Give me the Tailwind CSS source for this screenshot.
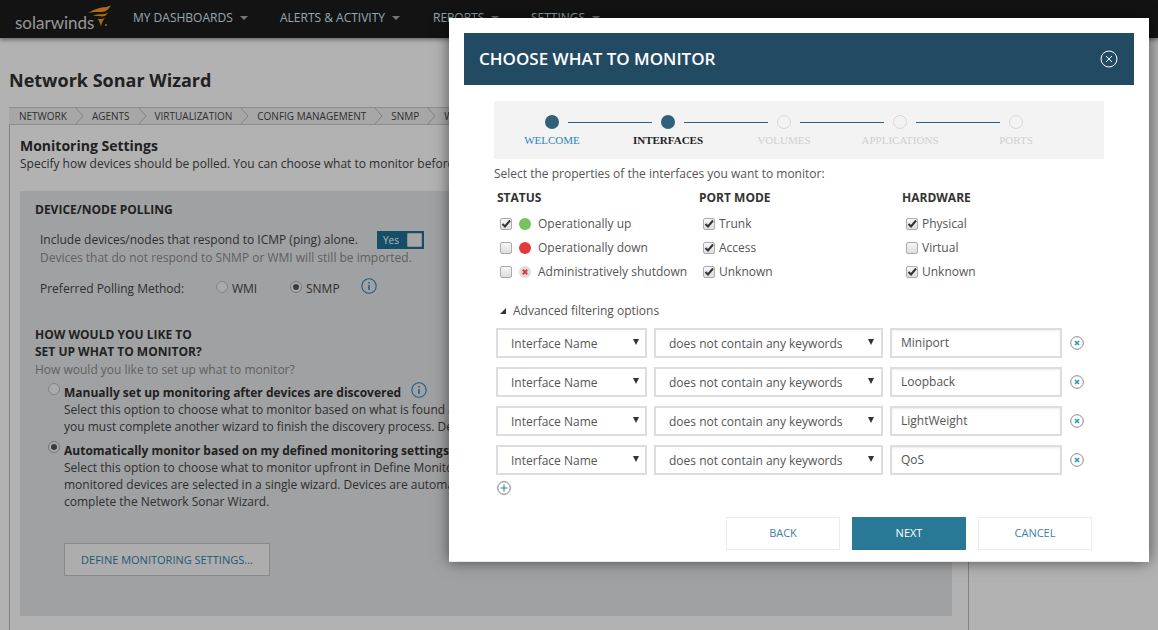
<!doctype html>
<html>
<head>
<meta charset="utf-8">
<script src="https://cdn.jsdelivr.net/npm/@tailwindcss/browser@4"></script>
</head>
<body class="font-['Open_Sans',sans-serif] bg-white text-[#444] h-[630px] overflow-hidden relative">
<header class="h-[38px] bg-[#1c1c1c] flex items-center shadow-[0_2px_4px_rgba(0,0,0,.4)] relative">
  <div class="flex items-center w-[133px] pl-[15px] shrink-0">
    <span class="font-['Lato',sans-serif] text-[17px] text-[#d8d8d8] leading-none mt-[6px] w-[73px]">solarwinds</span>
    <svg class="w-[23px] h-[23px] -mt-[6px] shrink-0" viewBox="0 0 23 23" fill="#f99d1c"><path d="M23 0C19 3 15 1.500 10 3.500 6 5 3 6 0 8 5 6.500 10 7 14 7 18 7 21 4 23 0Z"/><path d="M20 7.500C17 10 13 9 9 9.500 7 9.800 6 10.200 5 11 8 10.500 11 11.500 14 11.500 16.500 11.500 19 10 20 7.500Z"/><path d="M17 12.500C15 14.500 12 14 9.500 14 11 15 12 18 13 21.500 13.500 18 15 15 17 12.500Z"/><circle cx="18" cy="20" r="1"/></svg>
  </div>
  <nav class="flex text-[12px] text-[#dbe9f5] -mt-[3px]">
    <span class="flex items-center w-[147px]">MY DASHBOARDS<i class="ml-[7px] border-x-[4px] border-x-transparent border-t-[4px] border-t-[#aaa]"></i></span>
    <span class="flex items-center w-[153px]">ALERTS &amp; ACTIVITY<i class="ml-[7px] border-x-[4px] border-x-transparent border-t-[4px] border-t-[#aaa]"></i></span>
    <span class="flex items-center w-[98px]">REPORTS<i class="ml-[7px] border-x-[4px] border-x-transparent border-t-[4px] border-t-[#aaa]"></i></span>
    <span class="flex items-center">SETTINGS<i class="ml-[7px] border-x-[4px] border-x-transparent border-t-[4px] border-t-[#aaa]"></i></span>
  </nav>
</header>

<main class="pl-[9px]">
  <h1 class="pt-[30px] h-[69px] text-[18px] leading-[25px] font-bold text-[#303030]">Network Sonar Wizard</h1>
  <div class="w-[960px] h-[523px] border-x border-[#bbb]">
    <div class="h-[18px] bg-[#f0f0f0] border-y border-[#ccc] -mr-px flex items-center text-[10px] text-[#444] uppercase whitespace-nowrap pl-[10px] -ml-px">
      <span>Network</span><svg class="w-[9px] h-[18px] mx-[8px]" viewBox="0 0 9 18" fill="none" stroke="#bbb"><path d="M0 0 L8 9 L0 18"/></svg>
      <span>Agents</span><svg class="w-[9px] h-[18px] mx-[8px]" viewBox="0 0 9 18" fill="none" stroke="#bbb"><path d="M0 0 L8 9 L0 18"/></svg>
      <span>Virtualization</span><svg class="w-[9px] h-[18px] mx-[8px]" viewBox="0 0 9 18" fill="none" stroke="#bbb"><path d="M0 0 L8 9 L0 18"/></svg>
      <span>Config Management</span><svg class="w-[9px] h-[18px] mx-[8px]" viewBox="0 0 9 18" fill="none" stroke="#bbb"><path d="M0 0 L8 9 L0 18"/></svg>
      <span>SNMP</span><svg class="w-[9px] h-[18px] mx-[8px]" viewBox="0 0 9 18" fill="none" stroke="#bbb"><path d="M0 0 L8 9 L0 18"/></svg>
      <span>WMI</span>
    </div>
    <div class="px-[10px]">
      <h2 class="mt-[11px] text-[14px] leading-[19px] font-bold text-[#303030]">Monitoring Settings</h2>
      <p class="text-[12px] leading-[17px] whitespace-nowrap">Specify how devices should be polled. You can choose what to monitor before or after devices are discovered.</p>
      <section class="mt-[19px] h-[425px] w-[932px] bg-[#e6e7e9] pl-[15px] pt-[10px] whitespace-nowrap text-[12px] leading-[17px]">
        <h3 class="text-[12px] font-bold text-[#303030]">DEVICE/NODE POLLING</h3>
        <div class="ml-[5px] mt-[13px] flex items-center h-[18px]">
          <span class="w-[337px] -mt-[2px]">Include devices/nodes that respond to ICMP (ping) alone.</span>
          <span class="w-[47px] h-[18px] bg-[#1d7294] text-white text-[10px] flex items-center justify-between pl-[6px] pr-[2px]">Yes<i class="w-[15px] h-[14px] bg-[#eee] border border-[#ccc] rounded-[1px]"></i></span>
        </div>
        <p class="ml-[5px] text-[#8a8a8a] mt-[0px]">Devices that do not respond to SNMP or WMI will still be imported.</p>
        <div class="ml-[5px] mt-[13px] flex items-center h-[18px]">
          <span class="w-[176px]">Preferred Polling Method:</span>
          <i class="w-[12px] h-[12px] rounded-full border border-[#bbb] bg-[#f4f4f4] -mt-[3px]"></i><span class="ml-[4px] w-[58px]">WMI</span>
          <i class="w-[12px] h-[12px] rounded-full border border-[#aaa] bg-[#f4f4f4] -mt-[3px] flex items-center justify-center"><b class="w-[6px] h-[6px] rounded-full bg-[#555]"></b></i><span class="ml-[4px] w-[55px]">SNMP</span>
          <svg class="w-[16px] h-[16px] -mt-[5px]" viewBox="0 0 16 16" fill="none" stroke="#2a86b5" stroke-width="1.100"><circle cx="8" cy="8" r="7.200"/><path d="M8 7v5M8 4v1.600" stroke-width="1.500"/></svg>
        </div>
        <h3 class="mt-[29px] text-[12px] font-bold text-[#303030]">HOW WOULD YOU LIKE TO<br>SET UP WHAT TO MONITOR?</h3>
        <p class="text-[#8a8a8a] leading-[19px]">How would you like to set up what to monitor?</p>
        <div class="ml-[13px] mt-[5px] flex">
          <i class="w-[12px] h-[12px] rounded-full border border-[#bbb] bg-[#f4f4f4] mt-[-1px] shrink-0"></i>
          <div class="ml-[4px]">
            <div class="flex items-center font-bold text-[#303030] h-[17px]">Manually set up monitoring after devices are discovered<svg class="w-[16px] h-[16px] ml-[10px] -mt-[5px]" viewBox="0 0 16 16" fill="none" stroke="#2a86b5" stroke-width="1.100"><circle cx="8" cy="8" r="7.200"/><path d="M8 7v5M8 4v1.600" stroke-width="1.500"/></svg></div>
            <p>Select this option to choose what to monitor based on what is found after discovery,<br>you must complete another wizard to finish the discovery process. Devices are not monitored until then.</p>
          </div>
        </div>
        <div class="ml-[13px] mt-[7px] flex">
          <i class="w-[12px] h-[12px] rounded-full border border-[#aaa] bg-[#f4f4f4] mt-[-1px] shrink-0 flex items-center justify-center"><b class="w-[6px] h-[6px] rounded-full bg-[#555]"></b></i>
          <div class="ml-[4px]">
            <div class="font-bold text-[#303030] h-[17px]">Automatically monitor based on my defined monitoring settings</div>
            <p>Select this option to choose what to monitor upfront in Define Monitoring Settings. All<br>monitored devices are selected in a single wizard. Devices are automatically monitored when you<br>complete the Network Sonar Wizard.</p>
            <button class="mt-[33px] w-[206px] h-[33px] bg-[#f8f8f8] border border-[#c4c4c4] text-[11px] text-[#2d7fa8] uppercase">Define Monitoring Settings...</button>
          </div>
        </div>
      </section>
    </div>
  </div>
</main>

<div class="absolute inset-0 bg-black/30"></div>

<div class="absolute left-[449px] top-[18px] w-[700px] h-[544px] bg-white shadow-[0_0_14px_rgba(0,0,0,.55)] px-[15px] pt-[15px] text-[12px] text-[#555]">
  <div class="h-[52px] bg-[#234a63] flex items-center justify-between pl-[15px] pr-[16px] text-white">
    <span class="text-[17px] font-semibold">CHOOSE WHAT TO MONITOR</span>
    <svg class="w-[18px] h-[18px]" viewBox="0 0 18 18" fill="none" stroke="#fff"><circle cx="9" cy="9" r="8"/><path d="M6 6l6 6M12 6l-6 6"/></svg>
  </div>
  <div class="mx-[30px] mt-[16px]">
    <div class="h-[58px] bg-[#f3f3f3] pt-[14px] font-['Liberation_Serif',serif] text-[11px]">
      <div class="flex items-center ml-[51px]">
        <i class="w-[14px] h-[14px] rounded-full bg-[#325f7c]"></i><i class="w-[84px] h-px bg-[#325f7c] mx-[9px]"></i>
        <i class="w-[14px] h-[14px] rounded-full bg-[#325f7c]"></i><i class="w-[84px] h-px bg-[#325f7c] mx-[9px]"></i>
        <i class="w-[14px] h-[14px] rounded-full border border-[#d6d6d6]"></i><i class="w-[84px] h-px bg-[#325f7c] mx-[9px]"></i>
        <i class="w-[14px] h-[14px] rounded-full border border-[#d6d6d6]"></i><i class="w-[84px] h-px bg-[#325f7c] mx-[9px]"></i>
        <i class="w-[14px] h-[14px] rounded-full border border-[#d6d6d6]"></i>
      </div>
      <div class="flex mt-[4px] text-center leading-[14px]">
        <span class="w-[116px] text-[#2a86b5]">WELCOME</span>
        <span class="w-[116px] text-[#222] font-bold">INTERFACES</span>
        <span class="w-[116px] text-[#d0d0d0]">VOLUMES</span>
        <span class="w-[116px] text-[#d0d0d0]">APPLICATIONS</span>
        <span class="w-[116px] text-[#d0d0d0]">PORTS</span>
      </div>
    </div>
    <p class="mt-[6px] leading-[17px]">Select the properties of the interfaces you want to monitor:</p>

    <div class="flex mt-[7px] ml-[3px]">
      <div class="w-[202px]">
        <h4 class="text-[12px] font-bold text-[#333] leading-[17px]">STATUS</h4>
        <ul class="mt-[9px] ml-[3px] space-y-[7px] leading-[17px]">
          <li class="flex items-center h-[17px]"><span class="w-[12px] h-[12px] border border-[#aaa] rounded-[2px] bg-linear-to-b from-[#f6f6f6] to-[#dedede] flex items-center justify-center"><svg class="w-[10px] h-[10px]" viewBox="0 0 10 10" fill="none" stroke="#333" stroke-width="2"><path d="M1.500 5l2.500 2.500L9 1.500"/></svg></span><i class="w-[12px] h-[12px] rounded-full bg-[#76c25f] ml-[7px]"></i><span class="ml-[7px]">Operationally up</span></li>
          <li class="flex items-center h-[17px]"><span class="w-[12px] h-[12px] border border-[#aaa] rounded-[2px] bg-linear-to-b from-[#f6f6f6] to-[#dedede]"></span><i class="w-[12px] h-[12px] rounded-full bg-[#e23a3a] ml-[7px]"></i><span class="ml-[7px]">Operationally down</span></li>
          <li class="flex items-center h-[17px]"><span class="w-[12px] h-[12px] border border-[#aaa] rounded-[2px] bg-linear-to-b from-[#f6f6f6] to-[#dedede]"></span><svg class="w-[12px] h-[12px] ml-[7px]" viewBox="0 0 12 12"><circle cx="6" cy="6" r="6" fill="#ddd"/><path d="M3.800 3.800l4.400 4.400M8.200 3.800l-4.400 4.400" stroke="#e23a3a" stroke-width="2"/></svg><span class="ml-[7px]">Administratively shutdown</span></li>
        </ul>
      </div>
      <div class="w-[203px]">
        <h4 class="text-[12px] font-bold text-[#333] leading-[17px]">PORT MODE</h4>
        <ul class="mt-[9px] ml-[4px] space-y-[7px] leading-[17px]">
          <li class="flex items-center h-[17px]"><span class="w-[12px] h-[12px] border border-[#aaa] rounded-[2px] bg-linear-to-b from-[#f6f6f6] to-[#dedede] flex items-center justify-center"><svg class="w-[10px] h-[10px]" viewBox="0 0 10 10" fill="none" stroke="#333" stroke-width="2"><path d="M1.500 5l2.500 2.500L9 1.500"/></svg></span><span class="ml-[4px]">Trunk</span></li>
          <li class="flex items-center h-[17px]"><span class="w-[12px] h-[12px] border border-[#aaa] rounded-[2px] bg-linear-to-b from-[#f6f6f6] to-[#dedede] flex items-center justify-center"><svg class="w-[10px] h-[10px]" viewBox="0 0 10 10" fill="none" stroke="#333" stroke-width="2"><path d="M1.500 5l2.500 2.500L9 1.500"/></svg></span><span class="ml-[4px]">Access</span></li>
          <li class="flex items-center h-[17px]"><span class="w-[12px] h-[12px] border border-[#aaa] rounded-[2px] bg-linear-to-b from-[#f6f6f6] to-[#dedede] flex items-center justify-center"><svg class="w-[10px] h-[10px]" viewBox="0 0 10 10" fill="none" stroke="#333" stroke-width="2"><path d="M1.500 5l2.500 2.500L9 1.500"/></svg></span><span class="ml-[4px]">Unknown</span></li>
        </ul>
      </div>
      <div>
        <h4 class="text-[12px] font-bold text-[#333] leading-[17px]">HARDWARE</h4>
        <ul class="mt-[9px] ml-[4px] space-y-[7px] leading-[17px]">
          <li class="flex items-center h-[17px]"><span class="w-[12px] h-[12px] border border-[#aaa] rounded-[2px] bg-linear-to-b from-[#f6f6f6] to-[#dedede] flex items-center justify-center"><svg class="w-[10px] h-[10px]" viewBox="0 0 10 10" fill="none" stroke="#333" stroke-width="2"><path d="M1.500 5l2.500 2.500L9 1.500"/></svg></span><span class="ml-[4px]">Physical</span></li>
          <li class="flex items-center h-[17px]"><span class="w-[12px] h-[12px] border border-[#aaa] rounded-[2px] bg-linear-to-b from-[#f6f6f6] to-[#dedede]"></span><span class="ml-[4px]">Virtual</span></li>
          <li class="flex items-center h-[17px]"><span class="w-[12px] h-[12px] border border-[#aaa] rounded-[2px] bg-linear-to-b from-[#f6f6f6] to-[#dedede] flex items-center justify-center"><svg class="w-[10px] h-[10px]" viewBox="0 0 10 10" fill="none" stroke="#333" stroke-width="2"><path d="M1.500 5l2.500 2.500L9 1.500"/></svg></span><span class="ml-[4px]">Unknown</span></li>
        </ul>
      </div>
    </div>

    <div class="flex items-center mt-[22px] ml-[6px] h-[17px]"><svg class="w-[6px] h-[6px]" viewBox="0 0 6 6" fill="#333"><path d="M6 0v6H0z"/></svg><span class="ml-[7px]">Advanced filtering options</span></div>

    <div class="ml-[2px] mt-[9px] space-y-[9px]">
      <div class="flex items-center h-[30px] gap-[7px]">
        <div class="w-[151px] h-[30px] border-2 border-[#ddd] flex items-center justify-between pl-[13px] pr-[6px] pt-[2px]">Interface Name<i class="border-x-[3.500px] border-x-transparent border-t-[6px] border-t-[#333] -mt-[4px]"></i></div>
        <div class="w-[229px] h-[30px] border-2 border-[#ddd] flex items-center justify-between pl-[13px] pr-[7px] pt-[2px]">does not contain any keywords<i class="border-x-[3.500px] border-x-transparent border-t-[6px] border-t-[#333] -mt-[4px]"></i></div>
        <div class="w-[172px] h-[30px] border-2 border-[#ddd] flex items-center pl-[9px] shadow-[inset_0_1px_2px_rgba(0,0,0,.08)]">Miniport</div>
        <svg class="w-[14px] h-[14px] ml-[1px]" viewBox="0 0 14 14" fill="none"><circle cx="7" cy="7" r="6.300" stroke="#888"/><path d="M5 5l4 4M9 5l-4 4" stroke="#2a9bc5" stroke-width="1.700"/></svg>
      </div>
      <div class="flex items-center h-[30px] gap-[7px]">
        <div class="w-[151px] h-[30px] border-2 border-[#ddd] flex items-center justify-between pl-[13px] pr-[6px] pt-[2px]">Interface Name<i class="border-x-[3.500px] border-x-transparent border-t-[6px] border-t-[#333] -mt-[4px]"></i></div>
        <div class="w-[229px] h-[30px] border-2 border-[#ddd] flex items-center justify-between pl-[13px] pr-[7px] pt-[2px]">does not contain any keywords<i class="border-x-[3.500px] border-x-transparent border-t-[6px] border-t-[#333] -mt-[4px]"></i></div>
        <div class="w-[172px] h-[30px] border-2 border-[#ddd] flex items-center pl-[9px] shadow-[inset_0_1px_2px_rgba(0,0,0,.08)]">Loopback</div>
        <svg class="w-[14px] h-[14px] ml-[1px]" viewBox="0 0 14 14" fill="none"><circle cx="7" cy="7" r="6.300" stroke="#888"/><path d="M5 5l4 4M9 5l-4 4" stroke="#2a9bc5" stroke-width="1.700"/></svg>
      </div>
      <div class="flex items-center h-[30px] gap-[7px]">
        <div class="w-[151px] h-[30px] border-2 border-[#ddd] flex items-center justify-between pl-[13px] pr-[6px] pt-[2px]">Interface Name<i class="border-x-[3.500px] border-x-transparent border-t-[6px] border-t-[#333] -mt-[4px]"></i></div>
        <div class="w-[229px] h-[30px] border-2 border-[#ddd] flex items-center justify-between pl-[13px] pr-[7px] pt-[2px]">does not contain any keywords<i class="border-x-[3.500px] border-x-transparent border-t-[6px] border-t-[#333] -mt-[4px]"></i></div>
        <div class="w-[172px] h-[30px] border-2 border-[#ddd] flex items-center pl-[9px] shadow-[inset_0_1px_2px_rgba(0,0,0,.08)]">LightWeight</div>
        <svg class="w-[14px] h-[14px] ml-[1px]" viewBox="0 0 14 14" fill="none"><circle cx="7" cy="7" r="6.300" stroke="#888"/><path d="M5 5l4 4M9 5l-4 4" stroke="#2a9bc5" stroke-width="1.700"/></svg>
      </div>
      <div class="flex items-center h-[30px] gap-[7px]">
        <div class="w-[151px] h-[30px] border-2 border-[#ddd] flex items-center justify-between pl-[13px] pr-[6px] pt-[2px]">Interface Name<i class="border-x-[3.500px] border-x-transparent border-t-[6px] border-t-[#333] -mt-[4px]"></i></div>
        <div class="w-[229px] h-[30px] border-2 border-[#ddd] flex items-center justify-between pl-[13px] pr-[7px] pt-[2px]">does not contain any keywords<i class="border-x-[3.500px] border-x-transparent border-t-[6px] border-t-[#333] -mt-[4px]"></i></div>
        <div class="w-[172px] h-[30px] border-2 border-[#ddd] flex items-center pl-[9px] shadow-[inset_0_1px_2px_rgba(0,0,0,.08)]">QoS</div>
        <svg class="w-[14px] h-[14px] ml-[1px]" viewBox="0 0 14 14" fill="none"><circle cx="7" cy="7" r="6.300" stroke="#888"/><path d="M5 5l4 4M9 5l-4 4" stroke="#2a9bc5" stroke-width="1.700"/></svg>
      </div>
    </div>
    <svg class="w-[14px] h-[14px] ml-[3px] mt-[6px]" viewBox="0 0 14 14" fill="none"><circle cx="7" cy="7" r="6.300" stroke="#777"/><path d="M7 3.500v7M3.500 7h7" stroke="#2a7fa0"/></svg>

    <div class="flex justify-end gap-[12px] mt-[22px] mr-[12px]">
      <button class="w-[114px] h-[33px] border border-[#ececec] text-[#3d7fa8] text-[11px] uppercase">Back</button>
      <button class="w-[114px] h-[33px] bg-[#297996] text-white text-[11px] uppercase">Next</button>
      <button class="w-[114px] h-[33px] border border-[#ececec] text-[#3d7fa8] text-[11px] uppercase">Cancel</button>
    </div>
  </div>
  <div class="absolute left-0 bottom-0 w-[685px] h-px bg-[#e8e8e8]"></div>
</div>
</body>
</html>
